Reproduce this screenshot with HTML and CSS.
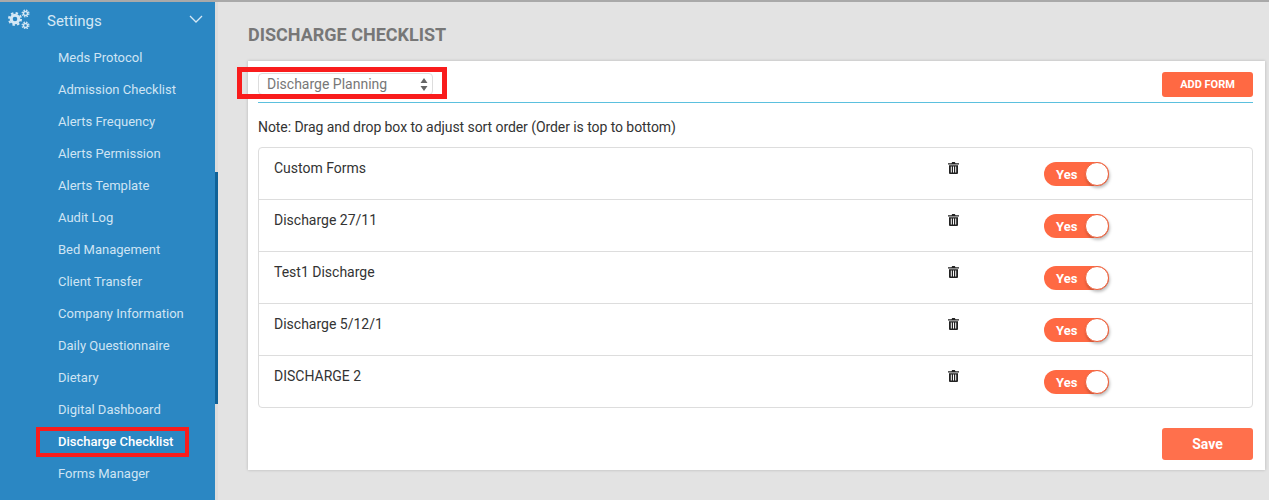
FILE: index.html
```html
<!DOCTYPE html>
<html lang="en">
<head>
    <meta charset="UTF-8">
    <title>Discharge Checklist</title>
    <link rel="stylesheet" href="styles.css">
</head>
<body>
    <div class="app">
        <aside class="sidebar">
            <div class="menu-head">
                <svg class="gears" width="24" height="20" viewBox="0 0 24 20">
                    <g fill="none" stroke="#d5e8f5">
                        <circle cx="7" cy="10" r="3.8" stroke-width="3"/>
                        <circle cx="7" cy="10" r="6" stroke-width="2" stroke-dasharray="2.4 2.3"/>
                        <circle cx="17.5" cy="4.5" r="2" stroke-width="1.4"/>
                        <circle cx="17.5" cy="4.5" r="3.4" stroke-width="1.2" stroke-dasharray="1.5 1.2"/>
                        <circle cx="17.5" cy="16.5" r="2" stroke-width="1.4"/>
                        <circle cx="17.5" cy="16.5" r="3.4" stroke-width="1.2" stroke-dasharray="1.5 1.2"/>
                    </g>
                </svg>
                <span class="menu-title">Settings</span>
                <svg class="chevron" width="14" height="8" viewBox="0 0 14 8">
                    <path d="M1 1l6 6 6-6" fill="none" stroke="#d5e8f5" stroke-width="1.3"/>
                </svg>
            </div>
            <ul class="menu">
                <li>Meds Protocol</li>
                <li>Admission Checklist</li>
                <li>Alerts Frequency</li>
                <li>Alerts Permission</li>
                <li>Alerts Template</li>
                <li>Audit Log</li>
                <li>Bed Management</li>
                <li>Client Transfer</li>
                <li>Company Information</li>
                <li>Daily Questionnaire</li>
                <li>Dietary</li>
                <li>Digital Dashboard</li>
                <li class="active">Discharge Checklist<span class="mark mark-menu"></span></li>
                <li>Forms Manager</li>
            </ul>
            <div class="scroll-thumb"></div>
        </aside>

        <main class="content">
            <h1 class="page-title">DISCHARGE CHECKLIST</h1>
            <section class="card">
                <div class="card-top">
                    <div class="select-box">
                        <span>Discharge Planning</span>
                        <svg width="8" height="13" viewBox="0 0 8 13">
                            <path d="M4 0l3.5 5H.5zM4 13L.5 8h7z" fill="#666"/>
                        </svg>
                        <span class="mark mark-select"></span>
                    </div>
                    <button class="btn btn-small">ADD FORM</button>
                </div>
                <p class="note">Note: Drag and drop box to adjust sort order (Order is top to bottom)</p>
                <div class="form-list">
                    <div class="form-row">
                        <span class="form-name">Custom Forms</span>
                        <svg class="trash" width="11" height="12" viewBox="0 0 11 12"><use href="#trash"/></svg>
                        <div class="toggle"><span>Yes</span><i></i></div>
                    </div>
                    <div class="form-row">
                        <span class="form-name">Discharge 27/11</span>
                        <svg class="trash" width="11" height="12" viewBox="0 0 11 12"><use href="#trash"/></svg>
                        <div class="toggle"><span>Yes</span><i></i></div>
                    </div>
                    <div class="form-row">
                        <span class="form-name">Test1 Discharge</span>
                        <svg class="trash" width="11" height="12" viewBox="0 0 11 12"><use href="#trash"/></svg>
                        <div class="toggle"><span>Yes</span><i></i></div>
                    </div>
                    <div class="form-row">
                        <span class="form-name">Discharge 5/12/1</span>
                        <svg class="trash" width="11" height="12" viewBox="0 0 11 12"><use href="#trash"/></svg>
                        <div class="toggle"><span>Yes</span><i></i></div>
                    </div>
                    <div class="form-row">
                        <span class="form-name">DISCHARGE 2</span>
                        <svg class="trash" width="11" height="12" viewBox="0 0 11 12"><use href="#trash"/></svg>
                        <div class="toggle"><span>Yes</span><i></i></div>
                    </div>
                </div>
                <div class="card-foot">
                    <button class="btn btn-save">Save</button>
                </div>
            </section>
        </main>
    </div>

    <svg width="0" height="0" class="defs">
        <symbol id="trash" viewBox="0 0 11 12">
            <path fill="#222" fill-rule="evenodd" d="M3.5 1.2L4.2 0h2.6l.7 1.2H11v1.2H0V1.2zM1 3.2h9V11a1 1 0 0 1-1 1H2a1 1 0 0 1-1-1zM2.8 4.6v5.8h1V4.6zm2.2 0v5.8h1V4.6zm2.2 0v5.8h1V4.6z"/>
        </symbol>
    </svg>
</body>
</html>
```

FILE: styles.css
```css
* {
    box-sizing: border-box;
}
html, body {
    margin: 0;
    height: 500px;
    overflow: hidden;
}
body {
    font-family: Roboto, 'Liberation Sans', sans-serif;
    background-color: #e3e3e3;
    color: #333;
}
.defs {
    display: block;
}
.app {
    display: flex;
    height: 500px;
    border-top: 2px solid #a9a9a9;
}

/* sidebar */
.sidebar {
    position: relative;
    flex: 0 0 218px;
    padding-right: 3px;
    background-color: #dcdcdc;
    overflow: hidden;
}
.menu-head {
    display: flex;
    align-items: center;
    width: 215px;
    height: 37px;
    background-color: #2b87c3;
    color: #d5e8f5;
}
.gears {
    margin-left: 8px;
    margin-bottom: 4px;
}
.menu-title {
    margin-left: 15px;
    font-size: 15px;
}
.chevron {
    margin-left: auto;
    margin-right: 12px;
    margin-bottom: 4px;
}
.menu {
    list-style: none;
    margin: 0;
    padding: 3px 0 0;
    width: 215px;
    height: 461px;
    background-color: #2b87c3;
}
.menu li {
    position: relative;
    height: 32px;
    padding-left: 58px;
    font-size: 13px;
    line-height: 32px;
    color: #cfe4f3;
}
.menu li.active {
    color: #fff;
    font-weight: 500;
}
.scroll-thumb {
    position: absolute;
    left: 215px;
    top: 170px;
    width: 3px;
    height: 232px;
    background-color: #0f6298;
}

/* red annotation boxes */
.mark {
    position: absolute;
    border: 4px solid #f91c1c;
    pointer-events: none;
}
.mark-menu {
    left: 36px;
    top: 1px;
    width: 153px;
    height: 30px;
}
.mark-select {
    left: -22px;
    top: -7px;
    width: 210px;
    height: 32px;
    border-width: 5px;
}

/* main area */
.content {
    flex: 1;
    padding: 0 4px 0 30px;
}
.page-title {
    margin: 0;
    height: 59px;
    padding-top: 23px;
    font-size: 18px;
    line-height: 20px;
    font-weight: 700;
    color: #777;
}
.card {
    height: 409px;
    padding: 0 12px 0 10px;
    background-color: #fff;
    box-shadow: 0 0 3px rgba(0, 0, 0, 0.2);
}
.card-top {
    display: flex;
    justify-content: space-between;
    align-items: center;
    height: 42px;
    padding-top: 5px;
    border-bottom: 1px solid #5bc0de;
}
.select-box {
    position: relative;
    display: flex;
    justify-content: space-between;
    align-items: center;
    width: 175px;
    height: 22px;
    padding: 0 4px 0 8px;
    border: 1px solid #ddd;
    border-radius: 4px;
    font-size: 14px;
    color: #777;
}
.btn {
    border: none;
    border-radius: 3px;
    color: #fff;
    font-family: inherit;
    font-weight: 700;
    background-color: #ff6943;
}
.btn-small {
    width: 91px;
    height: 25px;
    margin-top: 1px;
    font-size: 11px;
}
.note {
    margin: 0;
    padding-top: 16px;
    height: 44px;
    font-size: 14px;
    line-height: 17px;
    letter-spacing: -0.07px;
}
.form-list {
    border: 1px solid #ddd;
    border-radius: 4px;
}
.form-row {
    display: flex;
    height: 52px;
    border-bottom: 1px solid #ddd;
    font-size: 14px;
}
.form-row:last-child {
    height: 51px;
    border-bottom: none;
}
.form-name {
    width: 689px;
    padding: 12px 0 0 15px;
    line-height: 16px;
}
.trash {
    margin-top: 14px;
}
.toggle {
    position: relative;
    width: 65px;
    height: 24px;
    margin: 14px 0 0 85px;
    border-radius: 12px;
    background-color: #ff6943;
    color: #fff;
    font-size: 13px;
    font-weight: 700;
    line-height: 25px;
}
.toggle span {
    padding-left: 12px;
}
.toggle i {
    position: absolute;
    right: 0;
    top: 0;
    width: 24px;
    height: 24px;
    border: 1px solid #f0603a;
    border-radius: 50%;
    background-color: #fff;
    box-shadow: 1px 2px 3px rgba(0, 0, 0, 0.25);
}
.card-foot {
    display: flex;
    justify-content: flex-end;
    padding-top: 20px;
}
.btn-save {
    width: 91px;
    height: 32px;
    font-size: 14px;
    background-color: #ff704c;
}
```
